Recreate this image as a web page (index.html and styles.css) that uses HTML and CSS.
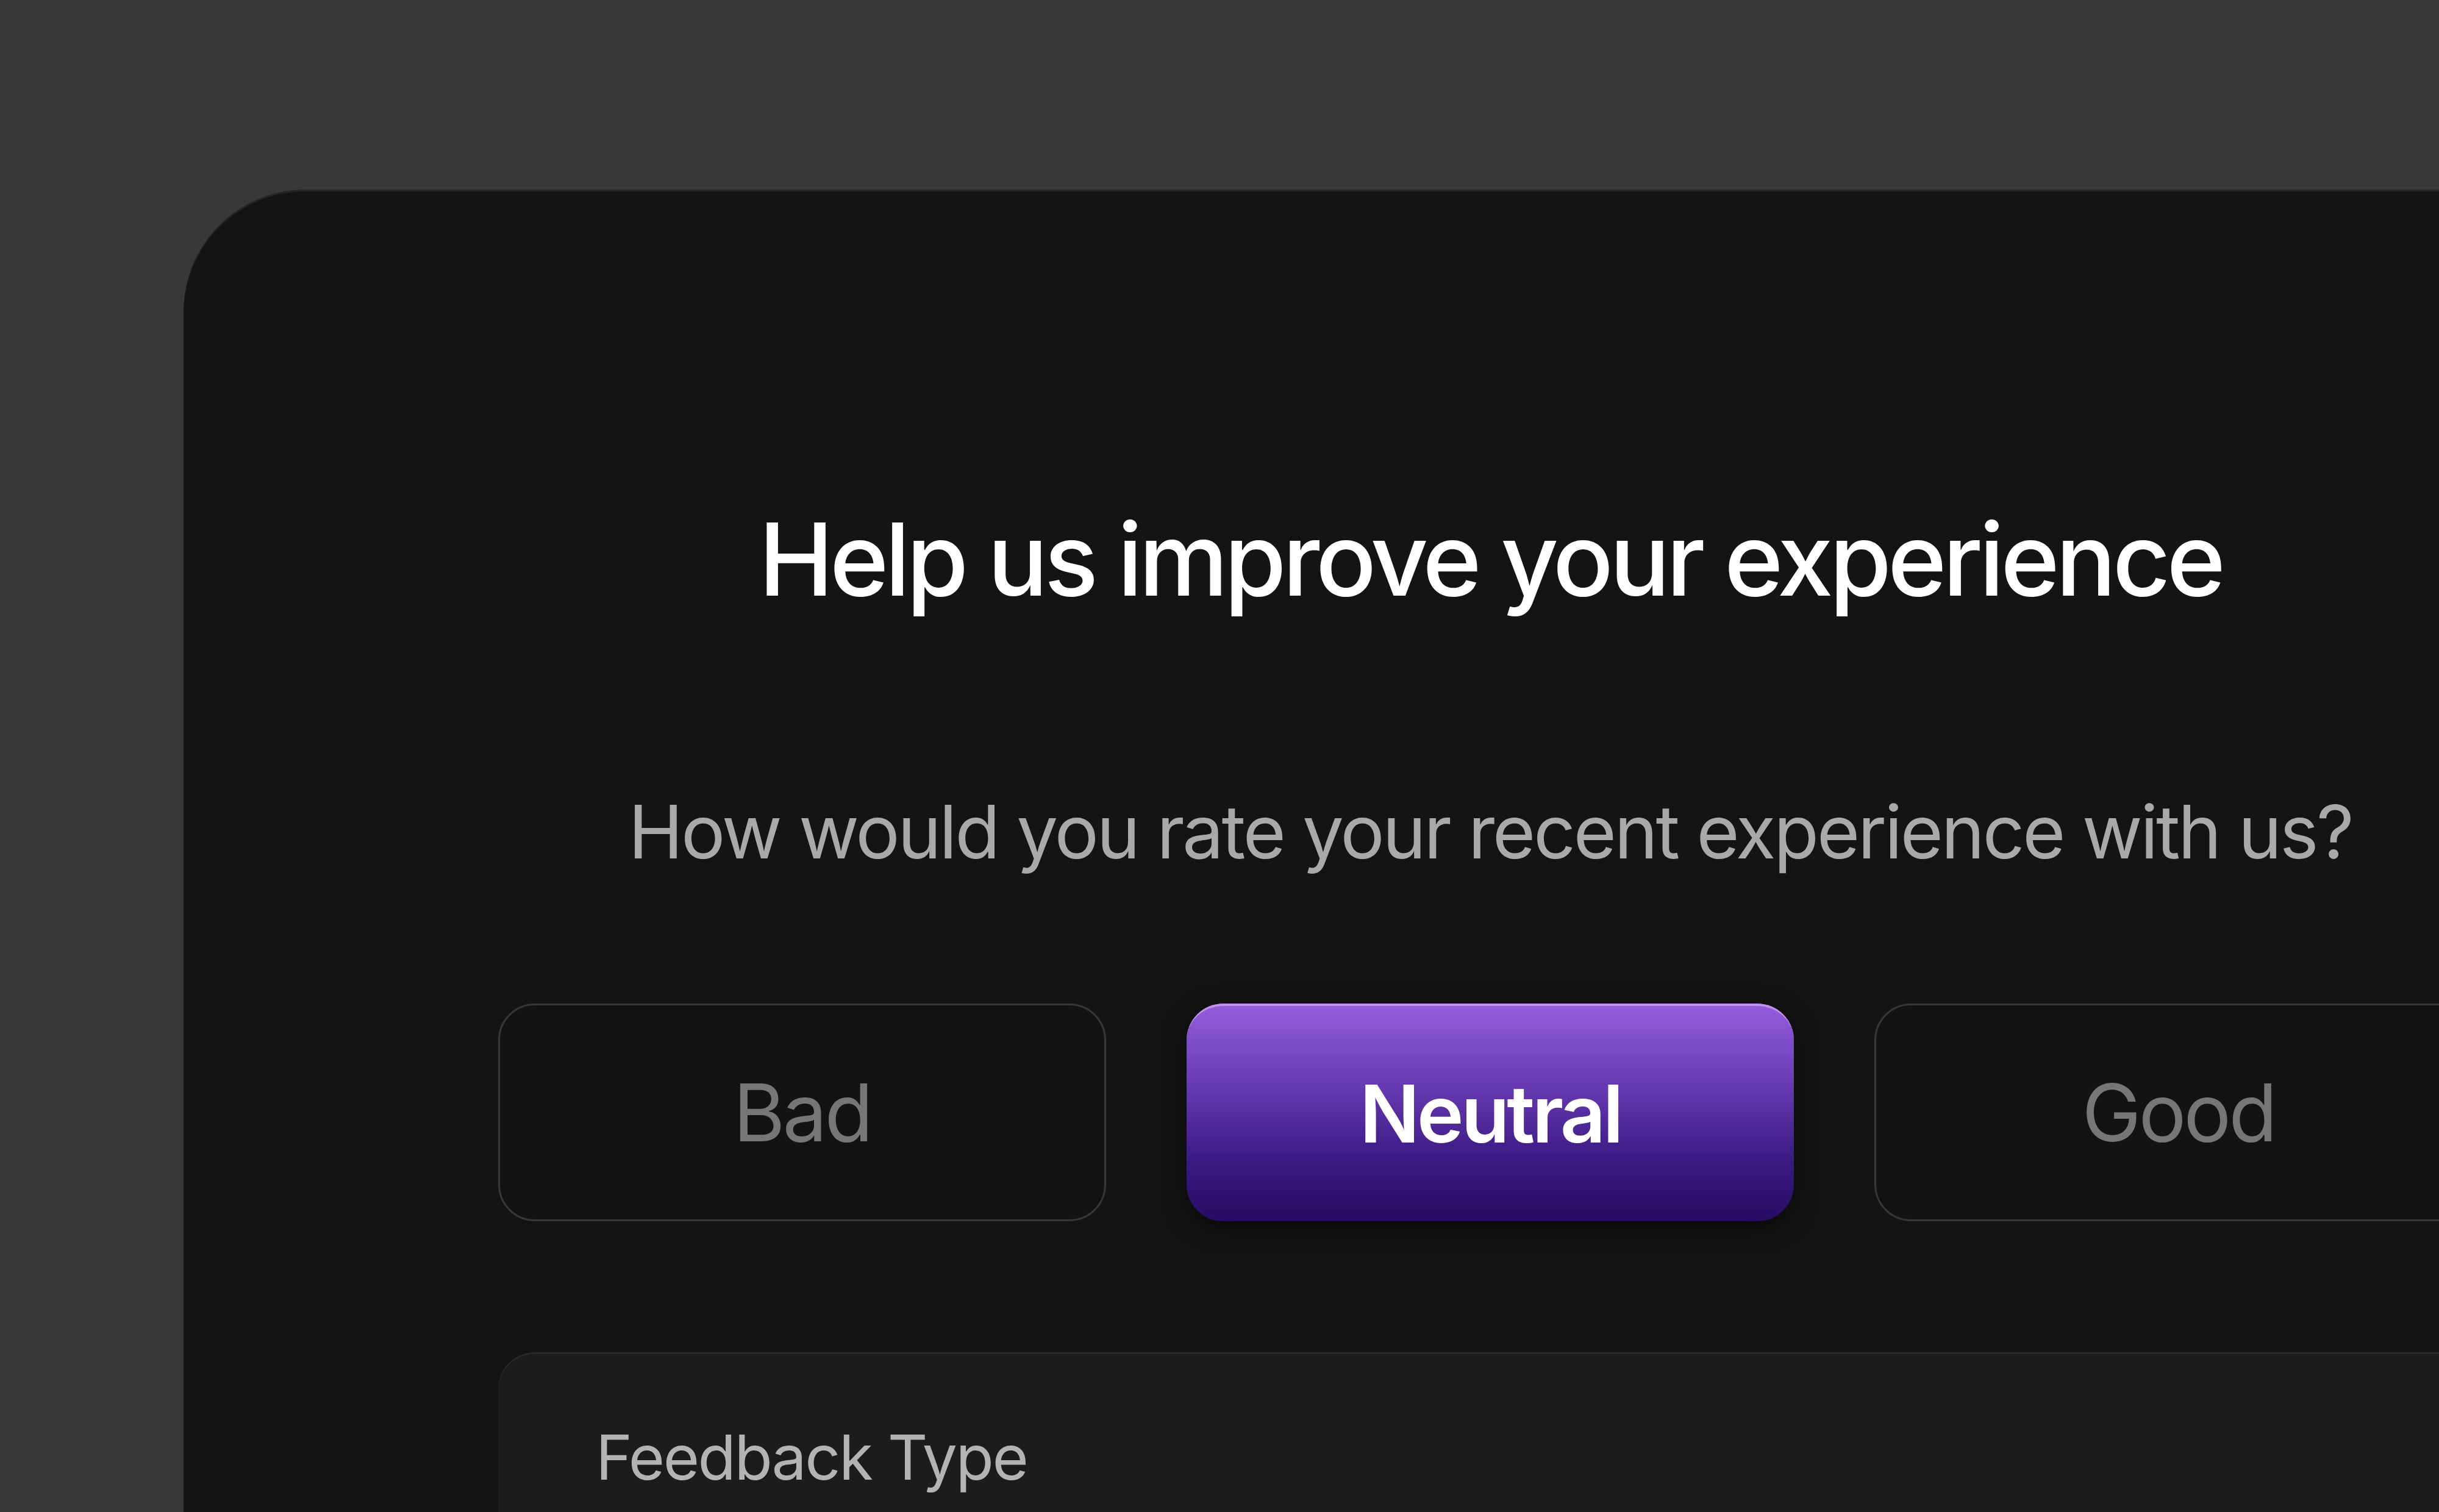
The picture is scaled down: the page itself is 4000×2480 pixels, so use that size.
FILE: index.html
```html
<!DOCTYPE html>
<html>
<head>
    <title>Feedback</title>
    <link rel="stylesheet" href="styles.css">
</head>
<body>
    <div class="card">
        <h1 class="title">Help us improve your experience</h1>
        <p class="subtitle">How would you rate your recent experience with us?</p>
        <div class="ratings">
            <button class="rate">Bad</button>
            <button class="rate active">Neutral</button>
            <button class="rate">Good</button>
        </div>
        <div class="panel">
            <label class="panel-label">Feedback Type</label>
        </div>
    </div>
</body>
</html>
```

FILE: styles.css
```css
html, body {
    margin: 0;
    height: 100%;
    overflow: hidden;
}
body {
    background-color: #37383a;
    font-family: Inter, "Noto Sans", sans-serif;
    padding: 311px 0 0 301px;
    box-sizing: border-box;
}
.card {
    width: 4286px;
    min-height: 2400px;
    box-sizing: border-box;
    padding: 507px 516px 0;
    background-color: #141414;
    border-radius: 200px 200px 0 0;
    box-shadow: inset 0 3px 0 rgba(255, 255, 255, 0.07);
}
.title {
    margin: 0;
    font-size: 165px;
    line-height: 1.2;
    font-weight: 500;
    color: #ffffff;
    text-align: center;
    letter-spacing: -6.4px;
}
.subtitle {
    margin: 276px 0 0;
    font-size: 121px;
    line-height: 1.2;
    font-weight: 400;
    color: #a9a9a9;
    text-align: center;
    letter-spacing: -3.5px;
}
.ratings {
    margin-top: 209px;
    display: grid;
    grid-template-columns: repeat(3, 1fr);
    gap: 132px;
}
.rate {
    height: 357px;
    border: 3px solid #373737;
    border-radius: 60px;
    background-color: #131313;
    color: #767676;
    font-family: inherit;
    font-size: 130px;
    font-weight: 400;
    letter-spacing: -4px;
}
.rate.active {
    border: none;
    border-top: 4px solid #c291f0;
    background: linear-gradient(180deg, #935ddb 0%, #6a3cb4 35%, #3d1b85 70%, #260c63 100%);
    color: #ffffff;
    font-weight: 600;
    letter-spacing: -4.5px;
    box-shadow: 0 10px 40px rgba(0, 0, 0, 0.6);
}
.panel {
    margin-top: 215px;
    min-height: 800px;
    padding: 111px 160px 0;
    background-color: #1c1c1d;
    border-radius: 60px;
    box-shadow: inset 0 3px 0 rgba(255, 255, 255, 0.06);
}
.panel-label {
    display: block;
    font-size: 102px;
    line-height: 1.2;
    color: #b3b3b3;
    letter-spacing: -2.5px;
}
```
